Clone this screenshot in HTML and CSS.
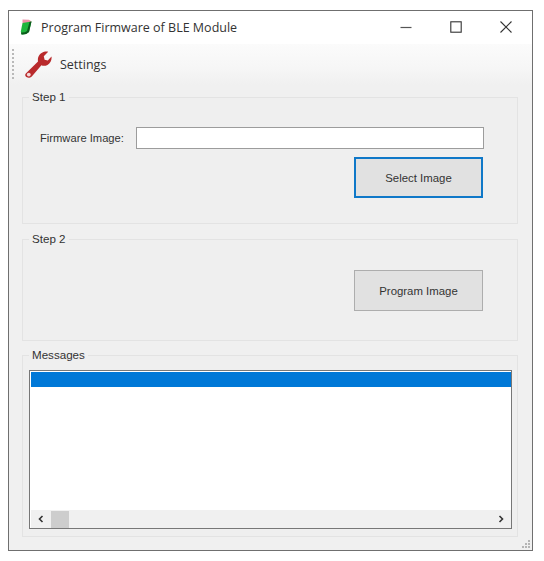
FILE: index.html
```html
<!DOCTYPE html>
<html lang="en">
<head>
<meta charset="utf-8">
<title>Program Firmware of BLE Module</title>
<link rel="stylesheet" href="styles.css">
</head>
<body>
<div class="window">
  <header class="titlebar">
    <svg class="app-icon" viewBox="0 0 12 16" width="12" height="16">
      <path d="M2.5 0.5 L9 0.8 L11.5 2.5 L8.5 4.5 L2.5 4Z" fill="#ee8fa8"/>
      <path d="M2.5 4 L11.5 2.5 L9 13 Q6 16 1.5 15.5 L0.8 12.5Z" fill="#1fb53c"/>
      <path d="M1.5 15.5 Q6 16 9 13 L11.5 2.5 L9.5 3 L7 12 Q4.5 14 1 13.5Z" fill="#0c5a1c"/>
    </svg>
    <span class="title">Program Firmware of BLE Module</span>
    <div class="controls">
      <svg width="12" height="12" viewBox="0 0 12 12"><path d="M0.5 6.5H11.5" stroke="#555" stroke-width="1.2"/></svg>
      <svg width="12" height="12" viewBox="0 0 12 12"><rect x="0.8" y="0.8" width="10.4" height="10.4" fill="none" stroke="#333" stroke-width="1.1"/></svg>
      <svg width="12" height="12" viewBox="0 0 12 12"><path d="M0.5 0.5L11.5 11.5M11.5 0.5L0.5 11.5" stroke="#333" stroke-width="1.1"/></svg>
    </div>
  </header>
  <div class="toolbar">
    <span class="grip"></span>
    <svg class="wrench" width="28" height="28" viewBox="0 0 28 28">
      <path d="M1.8 23.5 L14 11.5 C13.2 7 16 2.5 21 1.5 C22.2 1.3 23.4 1.4 24.2 1.7 L19.8 6.3 L20.6 9.8 L23.8 10.6 L27.5 6.4 C28 9.5 26.7 13.2 23.5 14.9 C21.5 16 19.2 16.1 17.4 15.3 L7.8 26.5 C5.8 28.3 3 28 1.8 26.6 C1 25.6 1 24.4 1.8 23.5Z" fill="#b92a2c"/>
      <circle cx="4.8" cy="24.6" r="1.9" fill="#f4d8d8"/>
    </svg>
    <span class="tool-label">Settings</span>
  </div>
  <main class="content">
    <fieldset class="group group-one">
      <legend>Step 1</legend>
      <div class="field-row">
        <label class="field-label" for="fw">Firmware Image:</label>
        <input class="field-input" id="fw" type="text">
      </div>
      <div class="button-row"><button class="btn btn-focus" type="button">Select Image</button></div>
    </fieldset>
    <fieldset class="group group-two">
      <legend>Step 2</legend>
      <div class="button-row"><button class="btn" type="button">Program Image</button></div>
    </fieldset>
    <fieldset class="group group-three">
      <legend>Messages</legend>
      <div class="listbox">
        <div class="list-body"><div class="list-selected"></div></div>
        <div class="hscroll">
          <svg class="arrow" width="8" height="8" viewBox="0 0 8 8"><path d="M5.5 1L2.5 4L5.5 7" fill="none" stroke="#333" stroke-width="1.6"/></svg>
          <span class="thumb"></span>
          <span class="track"></span>
          <svg class="arrow" width="8" height="8" viewBox="0 0 8 8"><path d="M2.5 1L5.5 4L2.5 7" fill="none" stroke="#333" stroke-width="1.6"/></svg>
        </div>
      </div>
    </fieldset>
  </main>
  <svg class="resize" width="10" height="10" viewBox="0 0 10 10" fill="#b5b5b5"><rect x="7" y="1" width="2" height="2"/><rect x="4" y="4" width="2" height="2"/><rect x="7" y="4" width="2" height="2"/><rect x="1" y="7" width="2" height="2"/><rect x="4" y="7" width="2" height="2"/><rect x="7" y="7" width="2" height="2"/></svg>
</div>
</body>
</html>
```
FILE: styles.css
```css
* { box-sizing: border-box; }
html, body { margin: 0; padding: 0; background: #fff; }
body {
  width: 544px;
  height: 561px;
  padding: 10px 0 0 8px;
  font-family: "Liberation Sans", Arial, sans-serif;
  color: #222;
  overflow: hidden;
}
.window {
  position: relative;
  width: 525px;
  height: 541px;
  border: 1px solid #6f6f6f;
  background: #f0f0f0;
  display: flex;
  flex-direction: column;
}
.titlebar {
  height: 33px;
  background: #fff;
  display: flex;
  align-items: center;
  padding-left: 11px;
  flex: none;
}
.app-icon { margin-right: 9px; margin-top: -1px; }
.title { font-family: "Open Sans", sans-serif; font-size: 12.5px; color: #333; margin-top: -1px; }
.controls {
  margin-left: auto;
  display: flex;
  gap: 38px;
  padding-right: 20px;
  margin-top: -1px;
}
.toolbar {
  height: 41px;
  flex: none;
  display: flex;
  align-items: center;
  padding-left: 3px;
  background: linear-gradient(#fbfbfb, #f6f6f6 60%, #f0f0f0);
}
.grip {
  width: 2px;
  height: 30px;
  margin-top: -2px;
  background: repeating-linear-gradient(#b9b9b9 0 2px, transparent 2px 4px);
}
.wrench { margin-left: 10px; margin-top: -1px; }
.tool-label { font-family: "Open Sans", sans-serif; font-size: 12.5px; margin-left: 8px; margin-top: -1px; color: #333; }
.content {
  padding: 4px 14px 0 13px;
  display: flex;
  flex-direction: column;
}
.group {
  margin: 0;
  padding: 0;
  min-width: 0;
  border: 1px solid #e3e3e3;
  background: #efefef;
}
.group legend {
  margin-left: 6px;
  padding: 0 3px;
  font-size: 11.6px;
  line-height: 16px;
  color: #333;
}
.group-one { height: 135px; }
.group-two { height: 110px; margin-top: 7px; }
.group-three { height: 190px; margin-top: 6px; padding: 7px 5px 6px 6px; }
.group-three legend { margin-left: 0; }
.field-row {
  display: flex;
  align-items: center;
  padding: 22px 33px 0 17px;
}
.field-label { font-size: 11.2px; color: #333; width: 96px; flex: none; }
.field-input {
  flex: 1;
  height: 22px;
  margin: 0;
  border: 1px solid #9c9c9c;
  background: #fff;
}
.button-row { display: flex; justify-content: flex-end; padding-right: 34px; }
.group-one .button-row { padding-top: 8px; }
.group-two .button-row { padding-top: 23px; }
.btn {
  width: 129px;
  height: 41px;
  border: 1px solid #adadad;
  background: #e1e1e1;
  font-family: "Liberation Sans", Arial, sans-serif;
  font-size: 11.4px;
  color: #333;
  padding: 0;
}
.btn-focus { border: 2px solid #0f78c8; }
.listbox {
  height: 159px;
  border: 1px solid #777;
  background: #fff;
  display: flex;
  flex-direction: column;
  padding: 1px 0 0 1px;
}
.list-body { flex: 1; }
.list-selected { height: 15px; background: #0078d7; }
.hscroll {
  height: 18px;
  flex: none;
  background: #f0f0f0;
  display: flex;
  align-items: center;
}
.arrow { margin: 0 6px; flex: none; }
.thumb { width: 18px; height: 17px; background: #cdcdcd; flex: none; }
.track { flex: 1; }
.resize { position: absolute; right: 1px; bottom: 1px; }
```
